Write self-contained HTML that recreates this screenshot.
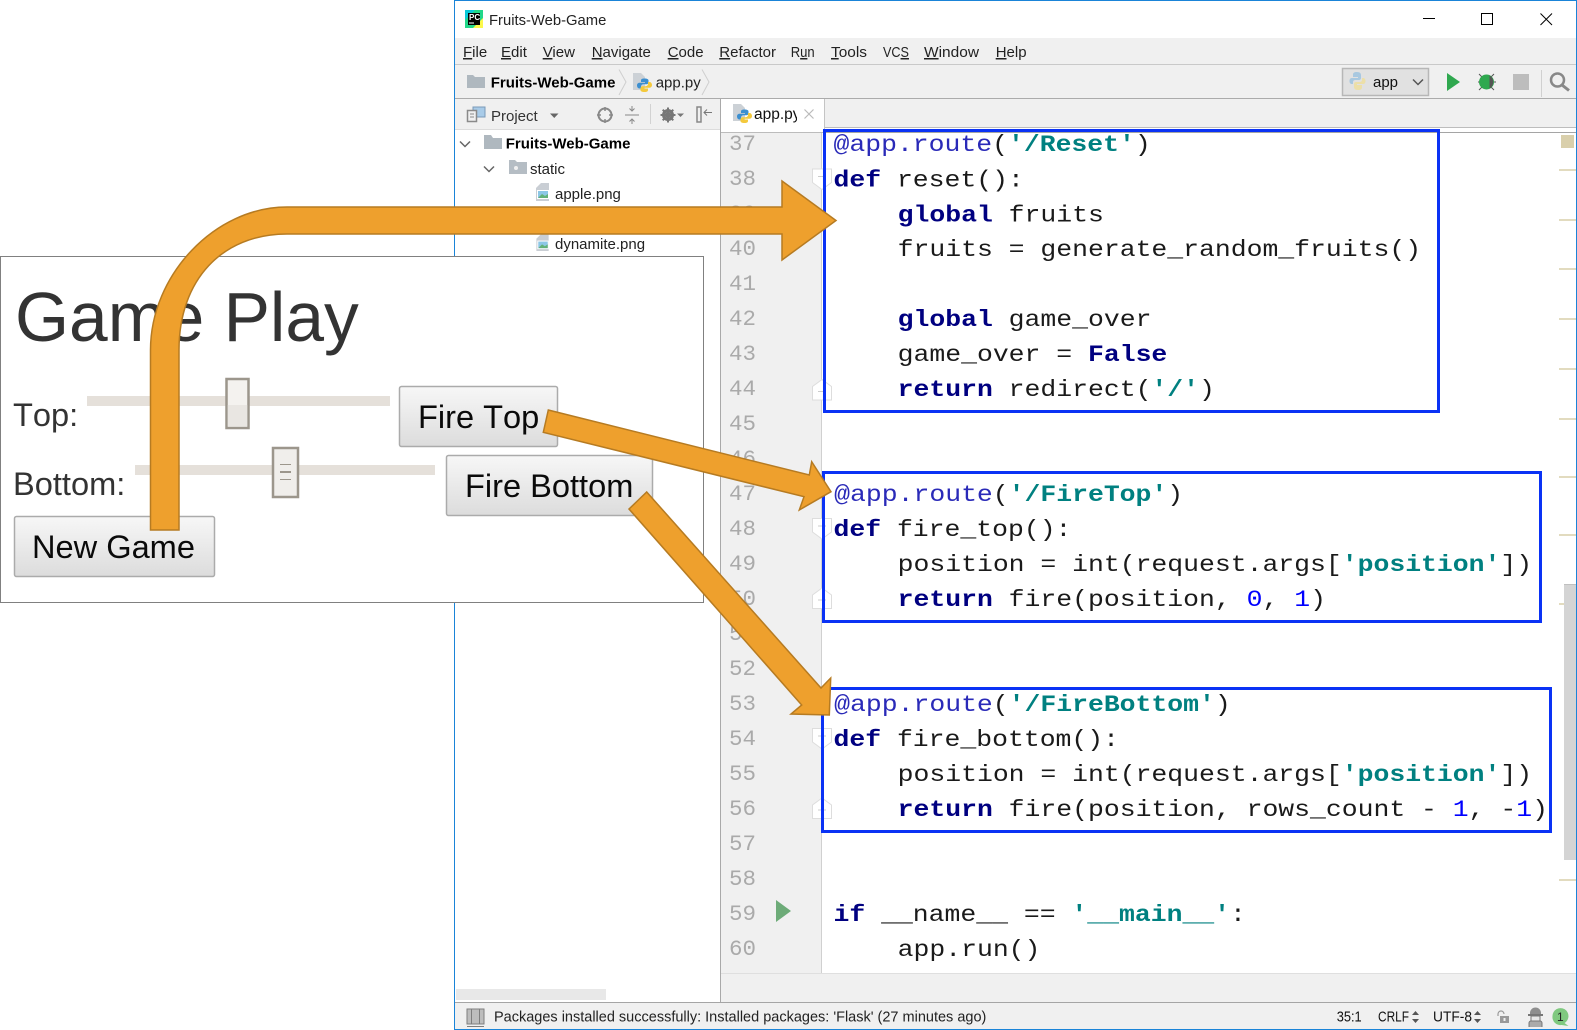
<!DOCTYPE html>
<html><head><meta charset="utf-8"><title>Fruits-Web-Game</title>
<style>
html,body{margin:0;padding:0;background:#fff;width:1577px;height:1030px;overflow:hidden}
svg{display:block;position:absolute;left:0;top:0}
text{font-family:"Liberation Sans",sans-serif;fill:#222}
.m{font-size:15px}
.b{font-weight:bold;fill:#000}
.c text{font-family:"Liberation Mono",monospace;font-size:23px;fill:#1a1a1a}
.n text{font-family:"Liberation Mono",monospace;font-size:22.5px;fill:#aaa}
.k{font-weight:bold;fill:#000080}
.s{font-weight:bold;fill:#008080}
.d{fill:#2a2ab8}
.v{fill:#0000ff}
.g text{fill:#333;font-kerning:none}
.bt{fill:#0a0a0a;font-size:32.6px;font-kerning:none}
</style></head><body>
<svg width="1577" height="1030" viewBox="0 0 1577 1030" xmlns="http://www.w3.org/2000/svg">
<defs>
<linearGradient id="bg" x1="0" y1="0" x2="0" y2="1"><stop offset="0" stop-color="#f7f7f7"/><stop offset="1" stop-color="#dcdcdc"/></linearGradient>
<symbol id="py" viewBox="0 0 18 20" overflow="visible">
<path d="M0 1H8L12 5V18H0z" fill="#ccd1d6"/>
<path d="M11.5 6.5c-3 0-3.5 1-3.5 2V10h4v.8H6.5C5 10.800 4 12 4 13.500s1 3 2.500 3H8v-2c0-1.200 1-2.200 2.500-2.200h3c1 0 2-.8 2-1.800V8.500c0-1-1-2-4-2z" fill="#3c8fd0"/>
<path d="M11.500 20c3 0 3.500-1 3.500-2v-1.500h-4v-.8h5.500c1.500 0 2.500-1.200 2.500-2.700s-1-3-2.500-3H15v2c0 1.200-1 2.200-2.500 2.200h-3c-1 0-2 .8-2 1.800v2c0 1 1 2 4 2z" fill="#f4c93c"/>
</symbol>
<symbol id="img" viewBox="0 0 14 18" overflow="visible">
<path d="M0 5L5 0H13V18H0z" fill="#c9ced4"/>
<rect x="1" y="7" width="12" height="9" fill="#fff"/>
<rect x="2" y="8" width="10" height="7" fill="#8cc7e6"/>
<path d="M2 15L6 11L9 13L12 11V15z" fill="#62b178"/>
</symbol>
<symbol id="foldd" viewBox="0 0 20 22" overflow="visible"><path d="M.5.500H19.500V14L10 21L.5 14z" fill="#fff" stroke="#ddd"/><path d="M6 8H14" stroke="#ccc"/></symbol>
<symbol id="foldu" viewBox="0 0 20 22" overflow="visible"><path d="M.5 21.500H19.500V8L10 1L.5 8z" fill="#fff" stroke="#ddd"/><path d="M6 13H14" stroke="#ccc"/></symbol>
</defs>

<!-- IDE chrome -->
<rect x="454" y="0" width="1123" height="1030" fill="#fff"/>
<rect x="455" y="38" width="1121" height="27" fill="#f0f0f0"/>
<rect x="455" y="64" width="1121" height="1" fill="#c9c9c9"/>
<rect x="455" y="65" width="1121" height="33" fill="#f0f0f0"/>
<rect x="455" y="98" width="1121" height="1" fill="#ababab"/>
<rect x="455" y="99" width="266" height="30" fill="#f0f0f0"/>
<rect x="455" y="129" width="266" height="1" fill="#dcdcdc"/>
<rect x="721" y="99" width="855" height="28" fill="#f0f0f0"/>
<rect x="721" y="99" width="103" height="33" fill="#fff"/>
<rect x="824" y="99" width="1" height="30" fill="#c4c4c4"/>
<rect x="825" y="127" width="751" height="1" fill="#bdbdbd"/>
<rect x="825" y="132" width="751" height="1" fill="#a5a5a5"/>
<rect x="721" y="132" width="101" height="841" fill="#f0f0f0"/>
<rect x="821" y="132" width="1" height="841" fill="#d0d0d0"/>
<rect x="721" y="132" width="104" height="1" fill="#bcbcbc"/>
<rect x="720" y="99" width="1" height="903" fill="#a9a9a9"/>
<rect x="721" y="973" width="855" height="29" fill="#f0f0f0"/>
<rect x="721" y="973" width="855" height="1" fill="#dfdfdf"/>
<rect x="456" y="989" width="150" height="11" fill="#e8e8e8"/>
<rect x="455" y="1002" width="1121" height="1" fill="#a5a5a5"/>
<rect x="455" y="1003" width="1121" height="26" fill="#f0f0f0"/>
<rect x="454" y="0" width="1" height="1030" fill="#1a84d8"/>
<rect x="454" y="0" width="1123" height="1" fill="#1a84d8"/>
<rect x="1576" y="0" width="1" height="1030" fill="#1a84d8"/>
<rect x="454" y="1029" width="1123" height="1" fill="#1a84d8"/>

<!-- title bar -->
<rect x="465" y="10" width="18" height="18" fill="#21d789"/>
<path d="M465 10h10l-10 10z" fill="#09c8d8"/>
<path d="M483 28h-10l10-10z" fill="#fcf84a"/>
<rect x="468" y="13" width="12" height="12" fill="#000"/>
<text x="469" y="20" style="font-size:8px;font-weight:bold;fill:#fff">PC</text>
<rect x="469" y="22.500" width="5" height="1" fill="#fff"/>
<text x="489" y="25" style="font-size:14.8px">Fruits-Web-Game</text>
<path d="M1423 18.500H1435" stroke="#000" stroke-width="1"/>
<rect x="1481.500" y="13.500" width="11" height="11" fill="none" stroke="#000"/>
<path d="M1540.500 13.500L1552 25M1552 13.500L1540.500 25" stroke="#000" stroke-width="1" fill="none"/>

<!-- menu -->
<g class="m">
<text x="463" y="57" class="m"><tspan text-decoration="underline">F</tspan>ile</text>
<text x="501" y="57" class="m"><tspan text-decoration="underline">E</tspan>dit</text>
<text x="542.700" y="57" class="m"><tspan text-decoration="underline">V</tspan>iew</text>
<text x="591.700" y="57" class="m"><tspan text-decoration="underline">N</tspan>avigate</text>
<text x="667.700" y="57" class="m"><tspan text-decoration="underline">C</tspan>ode</text>
<text x="719.300" y="57" class="m"><tspan text-decoration="underline">R</tspan>efactor</text>
<text x="790.700" y="57" class="m" textLength="24" lengthAdjust="spacingAndGlyphs">R<tspan text-decoration="underline">u</tspan>n</text>
<text x="831" y="57" class="m" textLength="36" lengthAdjust="spacingAndGlyphs"><tspan text-decoration="underline">T</tspan>ools</text>
<text x="883" y="57" class="m" textLength="26" lengthAdjust="spacingAndGlyphs">VC<tspan text-decoration="underline">S</tspan></text>
<text x="924" y="57" class="m" textLength="55" lengthAdjust="spacingAndGlyphs"><tspan text-decoration="underline">W</tspan>indow</text>
<text x="995.700" y="57" class="m"><tspan text-decoration="underline">H</tspan>elp</text>
</g>

<!-- nav bar -->
<path d="M467 75h6l2 2h10v11h-18z" fill="#afb8bf"/>
<text x="490.700" y="87.700" class="m b">Fruits-Web-Game</text>
<path d="M619 69.500L626 82L619 95" fill="none" stroke="#cfcfcf"/>
<use href="#py" x="633" y="72" width="18" height="20"/>
<text x="655.700" y="87.700" class="m">app.py</text>
<path d="M702 69.500L709 82L702 95" fill="none" stroke="#cfcfcf"/>

<rect x="1342.500" y="68.500" width="86" height="27" fill="#e1e1e1" stroke="#b7b7b7" stroke-width="1.500"/>
<path d="M1357 72c-3 0-4 1-4 2.500V77h5v1h-6c-1.500 0-2.500 1-2.500 3s1 3 2.500 3h1v-2c0-1.200 1-2 2.500-2h3.500c1 0 2-.8 2-2v-3c0-1.500-1-3-4-3z" fill="#a8c8e0"/>
<path d="M1358 90c3 0 4-1 4-2.500V85h-5v-1h6c1.500 0 2.500-1 2.500-3s-1-3-2.500-3h-1v2c0 1.200-1 2-2.500 2H1356c-1 0-2 .8-2 2v3c0 1.500 1 3 4 3z" fill="#ecdfa8"/>
<text x="1373" y="87" class="m" style="fill:#111">app</text>
<path d="M1413 79.500L1418 84.500L1423 79.500" fill="none" stroke="#555" stroke-width="1.500"/>
<path d="M1447 73L1460 82L1447 91z" fill="#2fa84f"/>
<g stroke="#555" stroke-width="1" fill="none"><path d="M1479 74l3 3M1494 74l-3 3M1478 82h3M1492 82h4M1479 90l3-3M1494 90l-3-3"/></g>
<ellipse cx="1486.500" cy="82" rx="7.500" ry="7.500" fill="#2fa84f"/>
<path d="M1489.500 75.500a7.500 7.500 0 0 1 0 13z" fill="#555"/>
<rect x="1513" y="74" width="16" height="16" fill="#bdbdbd"/>
<rect x="1541" y="70" width="1" height="27" fill="#d0d0d0"/>
<circle cx="1557.500" cy="80" r="6.500" fill="none" stroke="#888" stroke-width="2.500"/>
<path d="M1562 85L1569 90.500" stroke="#888" stroke-width="3"/>

<!-- project header -->
<rect x="473" y="107" width="12" height="10" fill="#a8cbe8" stroke="#7a9ab8" stroke-width="1"/>
<rect x="467.500" y="110.500" width="9" height="11" fill="#f0f0f0" stroke="#8a8a8a" stroke-width="1.500"/>
<path d="M470 114h4M470 117h4" stroke="#8a8a8a"/>
<text x="491" y="121" class="m" style="fill:#333">Project</text>
<path d="M550 113.500H558.500L554.250 118z" fill="#666"/>
<circle cx="605" cy="115" r="6.500" fill="none" stroke="#888" stroke-width="2"/>
<path d="M605 107v4M605 119v4M597 115h4M609 115h4" stroke="#888" stroke-width="1.500"/>
<path d="M625 115H639M632 106v4.500M629.500 108.500L632 111L634.500 108.500M632 124v-4.500M629.500 121.500L632 119L634.500 121.500" stroke="#888" fill="none"/>
<rect x="650" y="104" width="1" height="20" fill="#d2d2d2"/>
<circle cx="668" cy="115" r="4.500" fill="none" stroke="#777" stroke-width="3"/>
<path d="M668 107.500v15M660.500 115h15M662.700 109.700l10.600 10.600M673.300 109.700l-10.600 10.600" stroke="#777" stroke-width="2"/>
<path d="M677 113.500H684L680.500 117z" fill="#777"/>
<rect x="697" y="107" width="4" height="15" fill="none" stroke="#888" stroke-width="1.500"/>
<path d="M712 112.500H704M707 109.500L704 112.500L707 115.500" fill="none" stroke="#777"/>

<!-- tab -->
<use href="#py" x="733" y="103" width="18" height="20"/>
<clipPath id="tc"><rect x="750" y="100" width="47" height="30"/></clipPath>
<text x="754" y="119" class="m" clip-path="url(#tc)" style="fill:#111;font-size:15.500px">app.py</text>
<path d="M804.500 109.500L813.500 118.500M813.500 109.500L804.500 118.500" stroke="#bbb" stroke-width="1.200"/>

<!-- tree -->
<path d="M460 141.500L465 146.500L470 141.500" fill="none" stroke="#666" stroke-width="1.500"/>
<path d="M484 135h7l2 3h9v11h-18z" fill="#afb8bf"/>
<text x="505.700" y="148.500" class="m b">Fruits-Web-Game</text>
<path d="M484 166.500L489 171.500L494 166.500" fill="none" stroke="#666" stroke-width="1.500"/>
<path d="M509 160h6l2 2h10v12h-18z" fill="#b5bdc4"/>
<circle cx="516" cy="168" r="2" fill="#f0f0f0"/>
<text x="530" y="174" class="m" style="fill:#222">static</text>
<use href="#img" x="536" y="183" width="14" height="18"/>
<text x="555" y="199" class="m" style="fill:#222">apple.png</text>
<use href="#img" x="536" y="234" width="14" height="17"/>
<text x="555" y="249" class="m" style="fill:#222">dynamite.png</text>

<!-- line numbers -->
<g class="n" transform="translate(0,-0.8)">
<text x="729" y="151">37</text><text x="729" y="186">38</text><text x="729" y="221">39</text><text x="729" y="256">40</text><text x="729" y="291">41</text><text x="729" y="326">42</text><text x="729" y="361">43</text><text x="729" y="396">44</text><text x="729" y="431">45</text><text x="729" y="466">46</text><text x="729" y="501">47</text><text x="729" y="536">48</text><text x="729" y="571">49</text><text x="729" y="606">50</text><text x="729" y="641">51</text><text x="729" y="676">52</text><text x="729" y="711">53</text><text x="729" y="746">54</text><text x="729" y="781">55</text><text x="729" y="816">56</text><text x="729" y="851">57</text><text x="729" y="886">58</text><text x="729" y="921">59</text><text x="729" y="956">60</text>
</g>
<use href="#foldd" x="812" y="168.500" width="20" height="22"/>
<use href="#foldu" x="812" y="378.500" width="20" height="22"/>
<use href="#foldd" x="812" y="518" width="20" height="22"/>
<use href="#foldu" x="812" y="587" width="20" height="22"/>
<use href="#foldd" x="812" y="728" width="20" height="22"/>
<use href="#foldu" x="812" y="797" width="20" height="22"/>
<path d="M776 900L791 911L776 922z" fill="#6dab78"/>

<!-- code -->
<g class="c" transform="translate(833.5,0) scale(1.15,1)">
<text x="0" y="150.800"><tspan class="d">@app.route</tspan>(<tspan class="s">'/Reset'</tspan>)</text>
<text x="0" y="186.300"><tspan class="k">def</tspan> reset():</text>
<text x="55.800" y="221.300"><tspan class="k">global</tspan> fruits</text>
<text x="55.800" y="256.200">fruits = generate_random_fruits()</text>
<text x="55.800" y="326.200"><tspan class="k">global</tspan> game_over</text>
<text x="55.800" y="361.200">game_over = <tspan class="k">False</tspan></text>
<text x="55.800" y="396.100"><tspan class="k">return</tspan> redirect(<tspan class="s">'/'</tspan>)</text>
<text x="0.600" y="501.100"><tspan class="d">@app.route</tspan>(<tspan class="s">'/FireTop'</tspan>)</text>
<text x="0" y="536.100"><tspan class="k">def</tspan> fire_top():</text>
<text x="55.800" y="571"><tspan>position = int(request.args[</tspan><tspan class="s">'position'</tspan>])</text>
<text x="55.800" y="606"><tspan class="k">return</tspan> fire(position, <tspan class="v">0</tspan>, <tspan class="v">1</tspan>)</text>
<text x="0.600" y="711"><tspan class="d">@app.route</tspan>(<tspan class="s">'/FireBottom'</tspan>)</text>
<text x="0" y="746"><tspan class="k">def</tspan> fire_bottom():</text>
<text x="55.800" y="781"><tspan>position = int(request.args[</tspan><tspan class="s">'position'</tspan>])</text>
<text x="55.800" y="815.900"><tspan class="k">return</tspan> fire(position, rows_count - <tspan class="v">1</tspan>, -<tspan class="v">1</tspan>)</text>
<text x="0" y="920.900"><tspan class="k">if</tspan> __name__ == <tspan class="s">'__main__'</tspan>:</text>
<text x="55.800" y="955.800">app.run()</text>
</g>

<!-- right stripe -->
<rect x="1561" y="135" width="13" height="13" fill="#d9cfab"/>
<g fill="#e2dbbf">
<rect x="1559" y="169" width="17" height="2"/><rect x="1559" y="219" width="17" height="2"/><rect x="1559" y="268" width="17" height="2"/><rect x="1559" y="318" width="17" height="2"/><rect x="1559" y="368" width="17" height="2"/><rect x="1559" y="418" width="17" height="2"/><rect x="1559" y="476" width="17" height="2"/><rect x="1559" y="534" width="17" height="2"/><rect x="1559" y="603" width="17" height="2"/><rect x="1559" y="879" width="17" height="2"/>
</g>
<rect x="1564" y="584" width="12" height="276" fill="#d4d4d4"/>
<rect x="1564" y="584" width="12" height="1" fill="#c0c0c0"/>

<!-- status -->
<rect x="467" y="1009" width="17" height="15" fill="#bdbdbd" stroke="#7e7e7e"/>
<path d="M471.500 1009v15M479.500 1009v15M467 1026.500H484" stroke="#7e7e7e"/>
<text x="494" y="1021.500" style="font-size:14.5px;fill:#222">Packages installed successfully: Installed packages: 'Flask' (27 minutes ago)</text>
<text x="1336.700" y="1021.500" class="m" style="fill:#111" textLength="25" lengthAdjust="spacingAndGlyphs">35:1</text>
<text x="1378" y="1021.500" class="m" style="fill:#111" textLength="31" lengthAdjust="spacingAndGlyphs">CRLF</text>
<path d="M1412 1015L1415.500 1011L1419 1015zM1412 1019L1415.500 1023L1419 1019z" fill="#555"/>
<text x="1433" y="1021.500" class="m" style="fill:#111" textLength="39" lengthAdjust="spacingAndGlyphs">UTF-8</text>
<path d="M1474 1015L1477.500 1011L1481 1015zM1474 1019L1477.500 1023L1481 1019z" fill="#555"/>
<path d="M1498 1016v-2a3 3 0 0 1 6 0" fill="none" stroke="#999" stroke-width="1.200"/>
<rect x="1500" y="1016" width="9" height="7" fill="#999"/>
<rect x="1503.500" y="1018" width="2" height="3" fill="#f0f0f0"/>
<path d="M1530 1013a5.500 5.500 0 0 1 11 0v2h-11z" fill="#8e8e8e"/>
<rect x="1528" y="1014" width="15" height="2" fill="#777"/>
<rect x="1531" y="1016" width="9" height="5" fill="#e8e8e8" stroke="#777"/>
<path d="M1529 1027v-4a2 2 0 0 1 2-2h9a2 2 0 0 1 2 2v4" fill="#aaa" stroke="#777"/>
<path d="M1552.500 1016a8 8 0 1 1 12 7l4 3-7-1a8 8 0 0 1-9-9z" fill="#7fc97f"/>
<text x="1557" y="1021" style="font-size:12px;fill:#222">1</text>

<!-- Game window -->
<rect x="0.500" y="256.500" width="703" height="346" fill="#fff" stroke="#808080"/>
<g class="g">
<text x="15" y="341" style="font-size:69.500px">Game Play</text>
<text x="13" y="426" style="font-size:32.600px">Top:</text>
<text x="13" y="495" style="font-size:32.600px">Bottom:</text>
</g>
<rect x="87" y="396" width="303" height="10" fill="#e5e0da"/>
<rect x="226.500" y="379" width="22" height="49" fill="#f4f2ef" stroke="#9c968c" stroke-width="2.500"/>
<rect x="227.800" y="405" width="19.400" height="21.700" fill="#e9e6e2"/>
<rect x="135" y="465" width="300" height="10" fill="#e5e0da"/>
<rect x="273" y="448" width="25" height="49" fill="#f0eeeb" stroke="#9c968c" stroke-width="2.500"/>
<path d="M280 464.500H291M280 479.500H291" stroke="#9c968c" stroke-width="1"/>
<path d="M280 472H291" stroke="#9c968c" stroke-width="2"/>
<rect x="399.500" y="386.500" width="158" height="60" rx="2" fill="url(#bg)" stroke="#ababab" stroke-width="1.500"/>
<text x="418" y="428" class="bt">Fire Top</text>
<rect x="446.500" y="455.500" width="206" height="60" rx="2" fill="url(#bg)" stroke="#ababab" stroke-width="1.500"/>
<text x="465" y="497" class="bt">Fire Bottom</text>
<rect x="14.500" y="516.500" width="200" height="60" rx="2" fill="url(#bg)" stroke="#ababab" stroke-width="1.500"/>
<text x="32" y="558" class="bt">New Game</text>

<!-- blue boxes -->
<g fill="none" stroke="#0a32f5" stroke-width="3">
<rect x="824.500" y="130.500" width="614" height="281"/>
<rect x="823.500" y="472.500" width="717" height="149"/>
<rect x="822.500" y="688.500" width="728" height="143"/>
</g>

<!-- arrows -->
<g fill="#eea02d" stroke="#b67b22" stroke-width="1.500" stroke-linejoin="miter">
<path d="M150.500 530V350C150.500 275 215 207 287 207H782V181L836 220.500L782 260V234H287C222 234 179 280 179 350V530Z"/>
<path d="M548.300 410L809.300 475L811.700 461.700L831 491.700L799.300 510L804 496.700L543.300 432.300Z"/>
<path d="M646.700 492L821 688L830.700 678L829.300 715L791 714L801.700 705L629 509Z"/>
</g>
</svg>
</body></html>
